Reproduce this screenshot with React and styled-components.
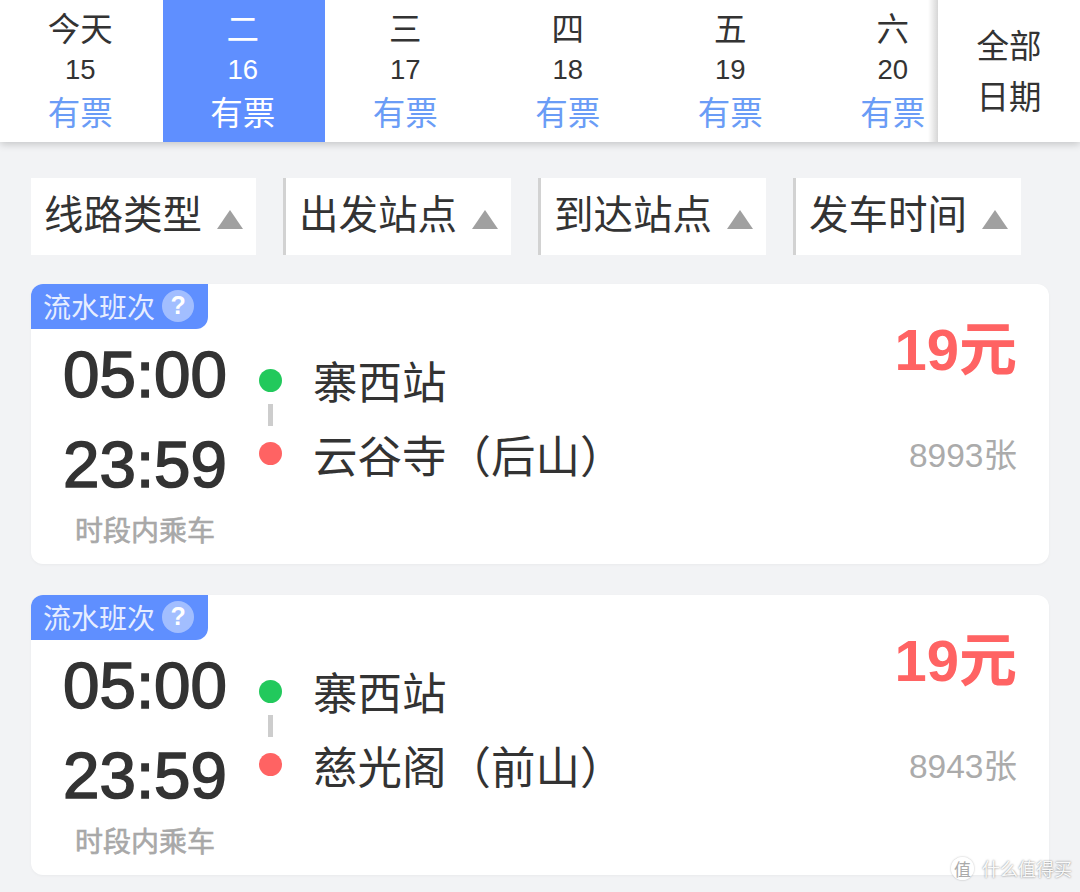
import React from "react";
import styled, { createGlobalStyle } from "styled-components";

const GlobalStyle = createGlobalStyle`
  html, body {
    margin: 0;
    padding: 0;
    background: #f2f3f5;
  }
  body {
    font-family: "Liberation Sans", "Noto Sans CJK SC", sans-serif;
    color: #333;
  }
`;

const Page = styled.div`
  position: relative;
  width: 1080px;
  height: 892px;
  overflow: hidden;
  background: #f2f3f5;
`;

const DateBar = styled.div`
  display: flex;
  height: 142px;
  background: #fff;
  box-shadow: 0 2px 8px rgba(0, 0, 0, 0.2);
`;

const DateScroller = styled.div`
  position: relative;
  display: flex;
  width: 938px;
  overflow: hidden;

  /* fade at the right edge of the scroller */
  &::after {
    content: "";
    position: absolute;
    top: 0;
    right: 0;
    bottom: 0;
    width: 10px;
    background: linear-gradient(to right, rgba(0, 0, 0, 0), rgba(0, 0, 0, 0.16));
  }
`;

const DateTab = styled.div`
  flex: 0 0 162.5px;
  display: flex;
  flex-direction: column;
  align-items: center;
  height: 142px;
  padding: 8px 2px 0 0;
  box-sizing: border-box;
  background: ${(p) => (p.$active ? "#5f8fff" : "transparent")};
  color: ${(p) => (p.$active ? "#fff" : "#333")};
`;

const DayName = styled.div`
  font-size: 32.5px;
  line-height: 44px;
`;

const DayNumber = styled.div`
  font-size: 27.5px;
  line-height: 36px;
`;

const TicketState = styled.div`
  font-size: 32.5px;
  line-height: 52px;
  color: ${(p) => (p.$active ? "#fff" : "#6a9cf6")};
`;

const AllDates = styled.div`
  flex: 1;
  display: flex;
  flex-direction: column;
  align-items: center;
  justify-content: center;
  margin-left: 2px;
  padding: 4px 2px 0 0;
  font-size: 32.5px;
  line-height: 51px;
`;

const FilterRow = styled.div`
  display: grid;
  grid-template-columns: repeat(4, 224.5px);
  column-gap: 30.5px;
  margin: 36px 0 0 31px;
`;

const FilterCell = styled.div`
  display: flex;
  align-items: center;
  height: 77px;
  padding: 0 0 11px 13px;
  box-sizing: border-box;
  background: #fff;
  font-size: 39.5px;
  box-shadow: ${(p) => (p.$divider ? "-3px 0 0 #d2d2d2" : "none")};
`;

const Triangle = styled.span`
  width: 0;
  height: 0;
  margin: 17px 0 0 15px;
  border-left: 13.5px solid transparent;
  border-right: 13.5px solid transparent;
  border-bottom: 19px solid #a0a0a0;
`;

const CardList = styled.div`
  display: flex;
  flex-direction: column;
  gap: 31px;
  margin: 29px 31px 0;
`;

const Card = styled.div`
  position: relative;
  display: flex;
  height: 280px;
  border-radius: 12px;
  background: #fff;
  box-shadow: 0 1px 3px rgba(0, 0, 0, 0.04);
`;

const Badge = styled.div`
  position: absolute;
  top: 0;
  left: 0;
  display: flex;
  align-items: center;
  width: 177px;
  height: 45px;
  padding: 0 0 2px 12px;
  box-sizing: border-box;
  border-radius: 12px 0 12px 0;
  background: #5f8fff;
  color: rgba(255, 255, 255, 0.85);
  font-size: 28px;
`;

const HelpMark = styled.span`
  display: flex;
  align-items: center;
  justify-content: center;
  width: 32px;
  height: 32px;
  margin-left: 7px;
  border-radius: 50%;
  background: rgba(255, 255, 255, 0.42);
  color: #fff;
  font-size: 25px;
  font-weight: 700;
`;

const TimeColumn = styled.div`
  flex: 0 0 164px;
  display: flex;
  flex-direction: column;
  align-items: center;
  margin-left: 32px;
  padding-top: 46px;
`;

const Time = styled.div`
  font-size: 65.5px;
  line-height: 90px;
  color: #333;
  -webkit-text-stroke: 1.6px #333;
`;

const TimeNote = styled.div`
  margin-top: 2px;
  font-size: 28px;
  line-height: 40px;
  color: #a8a8a8;
  -webkit-text-stroke: 0.6px #a8a8a8;
`;

const Track = styled.div`
  flex: 0 0 23px;
  display: flex;
  flex-direction: column;
  align-items: center;
  margin-left: 32px;
  padding-top: 85px;
`;

const Dot = styled.span`
  width: 23px;
  height: 23px;
  border-radius: 50%;
  background: ${(p) => p.$color};
`;

const TrackLine = styled.span`
  width: 5px;
  height: 22px;
  margin: 12px 0 16px;
  background: #cdcdcd;
`;

const Stations = styled.div`
  flex: 1;
  margin-left: 31px;
  padding-top: 63px;
  font-size: 44.5px;
  line-height: 74px;
  color: #333;
`;

const PriceColumn = styled.div`
  display: flex;
  flex-direction: column;
  align-items: flex-end;
  margin-right: 32px;
  padding-top: 36px;
`;

const Price = styled.div`
  font-size: 58px;
  line-height: 60px;
  font-weight: 700;
  color: #ff6363;
`;

const Remaining = styled.div`
  margin-top: 39px;
  font-size: 33.5px;
  line-height: 74px;
  color: #ababab;
`;

const Watermark = styled.div`
  position: absolute;
  right: 8px;
  bottom: 11px;
  display: flex;
  align-items: center;
  gap: 8px;
  color: rgba(255, 255, 255, 0.95);
  font-size: 18px;
  text-shadow: 0 0 2px rgba(0, 0, 0, 0.55);
`;

const WatermarkIcon = styled.span`
  display: flex;
  align-items: center;
  justify-content: center;
  width: 23px;
  height: 23px;
  border-radius: 50%;
  background: rgba(255, 255, 255, 0.85);
  box-shadow: 0 0 2px rgba(0, 0, 0, 0.3);
  color: #aaa;
  font-size: 17px;
  text-shadow: none;
`;

const days = [
  { name: "今天", date: 15 },
  { name: "二", date: 16, active: true },
  { name: "三", date: 17 },
  { name: "四", date: 18 },
  { name: "五", date: 19 },
  { name: "六", date: 20 },
];

const filters = ["线路类型", "出发站点", "到达站点", "发车时间"];

const routes = [
  { to: "云谷寺（后山）", left: "8993张" },
  { to: "慈光阁（前山）", left: "8943张" },
];

export default function App() {
  return (
    <Page>
      <GlobalStyle />
      <DateBar>
        <DateScroller>
          {days.map((d) => (
            <DateTab key={d.date} $active={d.active}>
              <DayName>{d.name}</DayName>
              <DayNumber>{d.date}</DayNumber>
              <TicketState $active={d.active}>有票</TicketState>
            </DateTab>
          ))}
        </DateScroller>
        <AllDates>
          <div>全部</div>
          <div>日期</div>
        </AllDates>
      </DateBar>

      <FilterRow>
        {filters.map((f, i) => (
          <FilterCell key={f} $divider={i > 0}>
            {f}
            <Triangle />
          </FilterCell>
        ))}
      </FilterRow>

      <CardList>
        {routes.map((r) => (
          <Card key={r.to}>
            <Badge>
              流水班次
              <HelpMark>?</HelpMark>
            </Badge>
            <TimeColumn>
              <Time>05:00</Time>
              <Time>23:59</Time>
              <TimeNote>时段内乘车</TimeNote>
            </TimeColumn>
            <Track>
              <Dot $color="#22c95c" />
              <TrackLine />
              <Dot $color="#ff6363" />
            </Track>
            <Stations>
              <div>寨西站</div>
              <div>{r.to}</div>
            </Stations>
            <PriceColumn>
              <Price>19元</Price>
              <Remaining>{r.left}</Remaining>
            </PriceColumn>
          </Card>
        ))}
      </CardList>

      <Watermark>
        <WatermarkIcon>值</WatermarkIcon>
        什么值得买
      </Watermark>
    </Page>
  );
}
